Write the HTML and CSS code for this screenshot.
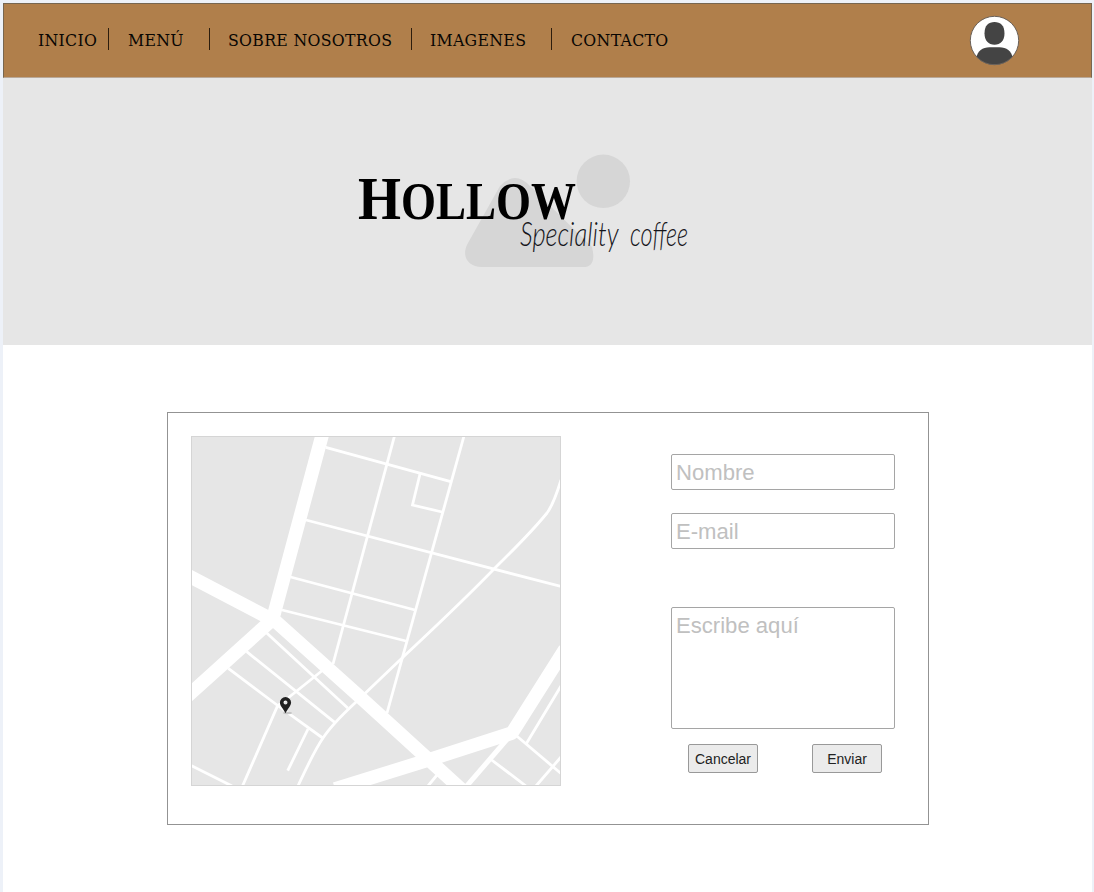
FILE: index.html
```html
<!DOCTYPE html>
<html lang="es">
<head>
<meta charset="utf-8">
<title>Hollow - Contacto</title>
<link rel="stylesheet" href="styles.css">
</head>
<body>
<div class="page">
  <header class="navbar">
    <nav class="menu">
      <a class="link inicio">INICIO</a>
      <a class="link carta">MENÚ</a>
      <a class="link nosotros">SOBRE NOSOTROS</a>
      <a class="link imagenes">IMAGENES</a>
      <a class="link contacto">CONTACTO</a>
    </nav>
    <svg class="avatar" viewBox="0 0 50 50">
      <defs><clipPath id="face"><circle cx="25.500" cy="25.500" r="24.300"/></clipPath></defs>
      <circle cx="25.500" cy="25.500" r="24.200" fill="#fff"/>
      <g clip-path="url(#face)" fill="#444">
        <path d="M25.500 7C31.500 7 35.500 10.500 35.500 18.500C35.500 25.500 31.500 29.800 25.500 29.800C19.500 29.800 15.500 25.500 15.500 18.500C15.500 10.500 19.500 7 25.500 7Z"/>
        <path d="M7 44C8.500 35.500 13.500 32.300 20.500 32.300H30.500C37.500 32.300 42.500 35.500 44 44V50H7Z"/>
      </g>
      <circle cx="25.500" cy="25.500" r="24.200" fill="none" stroke="#6b625a"/>
    </svg>
  </header>

  <section class="hero">
    <svg class="brand" viewBox="0 0 350 130">
      <g fill="#d6d6d6">
        <circle cx="253.300" cy="36.300" r="26.700"/>
        <path d="M150 41Q165 25 180 41L242 102Q247 122 233 122H132C117 122 111 110 118 98Z"/>
      </g>
      <text class="name" y="74"><tspan class="initial" x="8" textLength="43" lengthAdjust="spacingAndGlyphs">H</tspan><tspan x="51" textLength="175" lengthAdjust="spacingAndGlyphs">OLLOW</tspan></text>
      <text class="tagline" y="101"><tspan x="170" textLength="98" lengthAdjust="spacingAndGlyphs">Speciality</tspan> <tspan x="280" textLength="58" lengthAdjust="spacingAndGlyphs">coffee</tspan></text>
    </svg>
  </section>

  <main class="contact">
    <svg class="map" viewBox="191 436 370 350">
      <rect x="191.500" y="436.500" width="369" height="349" fill="#e6e6e6"/>
      <g fill="none" stroke="#fff">
        <g stroke-width="13.500" stroke-linejoin="round">
          <path d="M323 432L273 618M186 574.500L272 619.500M186 697.500L273 619L360 697L462 790M335 789L433 758.500L512 733L565 649"/>
        </g>
        <path stroke-width="5" d="M509 737L465 788"/>
        <g stroke-width="2.800">
          <path d="M325.700 447.300L450.700 481.700M306 520L561 586.500M290.500 577L415 610M282 610L406 641"/>
          <path d="M394.500 436L333 664M464 436L387 713M420 474L412.500 505L442 512"/>
          <path d="M561 480C557 493 553 505 547 513C530 534 512 551 494 569C460 604 435 627 400 660L355 703C342 715 331 726 323 738C314 751 306 769 298 786"/>
          <path d="M266.700 633L347.700 708M246.700 651.700L335 722.700M228.300 668.300L277 705L322.700 738"/>
          <path d="M321.700 671L288 698L277.500 706L242.500 786M308 729L287.700 770.700M191 765.500L232 786"/>
          <path d="M491.700 760L526 786M516.700 736L561 773.500M526.700 743L561 686M561 757L536 786M437 775L428 786"/>
        </g>
      </g>
      <ellipse cx="287.500" cy="713" rx="4.500" ry="1.200" fill="#c6c6c6"/>
      <path fill="#222" fill-rule="evenodd" d="M285.500 713.300C283.500 709 279.900 706 279.900 702.600A5.600 5.600 0 0 1 291.100 702.600C291.100 706 287.500 709 285.500 713.300ZM285.500 700.600A2 2 0 1 0 285.500 704.600A2 2 0 1 0 285.500 700.600Z"/>
      <rect x="191.500" y="436.500" width="369" height="349" fill="none" stroke="#d5d5d5"/>
    </svg>
    <form class="form">
      <input class="field" type="text" placeholder="Nombre">
      <input class="field" type="text" placeholder="E-mail">
      <textarea class="field message" placeholder="Escribe aquí"></textarea>
      <div class="actions">
        <button class="button" type="button">Cancelar</button>
        <button class="button" type="button">Enviar</button>
      </div>
    </form>
  </main>
</div>
</body>
</html>
```
FILE: styles.css
```css
* { box-sizing: border-box; }

body {
  margin: 0;
  height: 892px;
  padding: 3px 2px 0 3px;
  overflow: hidden;
  background: #edf1f8;
  font-family: "Liberation Sans", Arial, sans-serif;
}

.page { height: 889px; background: #fff; }

.navbar {
  display: flex;
  justify-content: space-between;
  height: 75px;
  padding: 12px 72px 0 34px;
  background: #b07f4b;
  border: 1px solid #776650;
  border-bottom-color: #b9a898;
}

.menu { display: flex; padding-top: 12px; }

.link {
  height: 22px;
  font: 17.5px/24px "DejaVu Serif Condensed", "DejaVu Serif", serif;
  font-stretch: condensed;
  letter-spacing: 0.3px;
  color: #080603;
  white-space: nowrap;
}
.link + .link { border-left: 1px solid #2c1d0d; }
.inicio { width: 70px; }
.carta { width: 101px; padding-left: 19px; }
.nosotros { width: 202px; padding-left: 18px; }
.imagenes { width: 140px; padding-left: 18px; }
.contacto { width: 120px; padding-left: 19px; }

.avatar { width: 50px; height: 50px; margin-top: -1px; overflow: visible; }

.hero {
  height: 267px;
  padding: 67px 0 0 347px;
  background: #e6e6e6;
}
.brand { display: block; width: 350px; height: 130px; overflow: visible; }
.name { font: bold 53px "Liberation Serif", serif; }
.initial { font-size: 62px; }
.tagline { font: italic 300 33px Lato, sans-serif; fill: #15151a; }

.contact {
  display: flex;
  justify-content: space-between;
  width: 762px;
  height: 413px;
  margin: 67px 0 0 164px;
  padding: 23px 33px 0 23px;
  border: 1px solid #939393;
}
.map { width: 370px; height: 350px; }

.form { display: flex; flex-direction: column; width: 224px; padding-top: 18px; }
.field {
  width: 224px;
  height: 36px;
  margin: 0 0 23px;
  padding: 2px 4px 0;
  border: 1px solid #a5a5a5;
  border-radius: 2px;
  outline: none;
  resize: none;
  background: #fff;
  font: 22.1px/26px "Liberation Sans", Arial, sans-serif;
}
.field::placeholder { color: #c0c0c0; opacity: 1; }
.message { height: 122px; margin: 35px 0 15px; padding-top: 5px; }

.actions { display: flex; justify-content: space-between; padding: 0 13px 0 17px; }
.button {
  width: 70px;
  height: 29px;
  padding: 0;
  border: 1px solid #999;
  border-radius: 2px;
  background: #ebebeb;
  font: 14px "Liberation Sans", Arial, sans-serif;
  color: #222;
}
```
